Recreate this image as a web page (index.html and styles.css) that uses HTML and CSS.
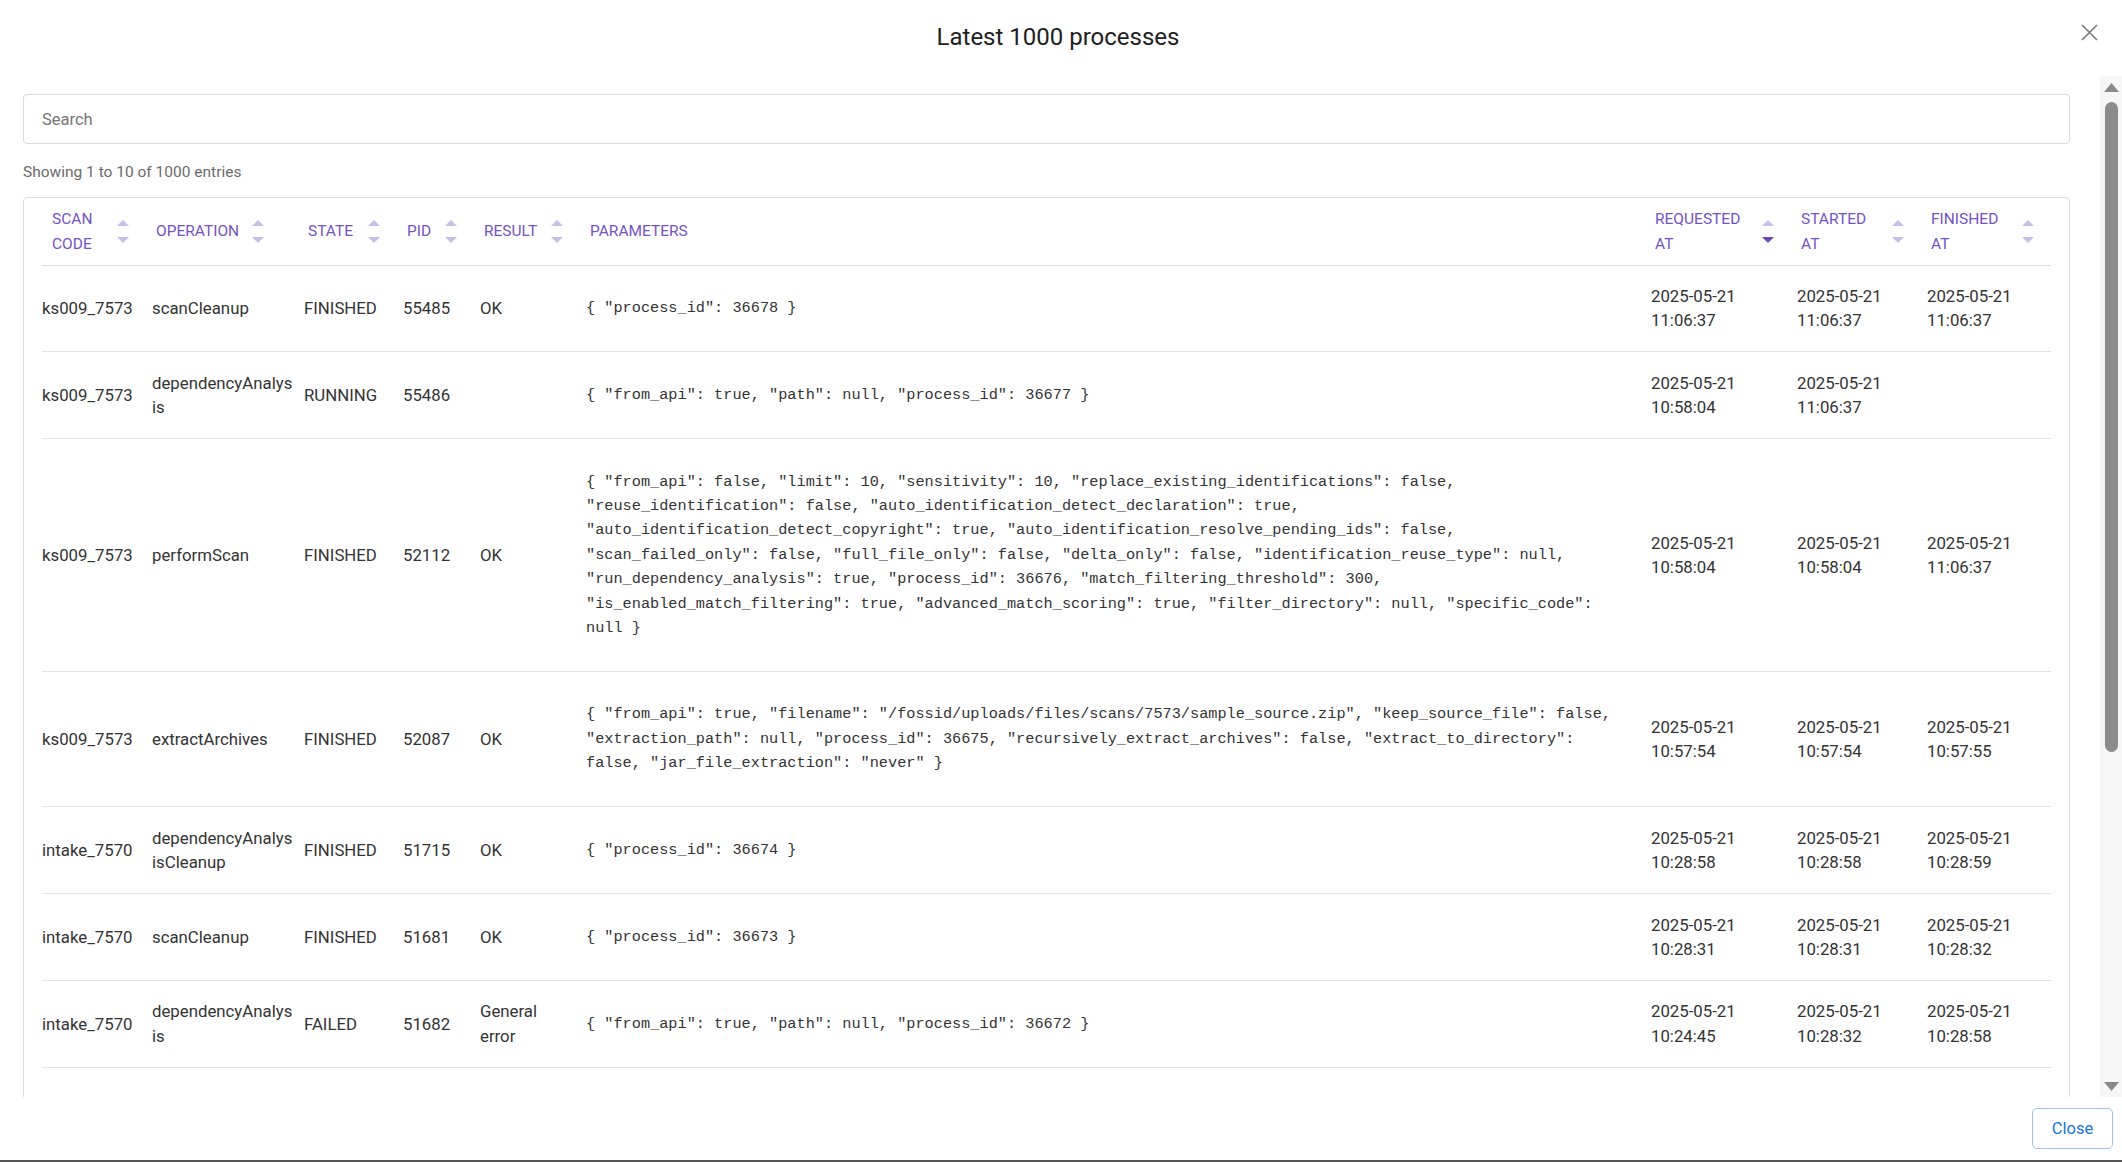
FILE: index.html
```html
<!DOCTYPE html>
<html lang="en">
<head>
<meta charset="utf-8">
<title>Latest 1000 processes</title>
<link rel="stylesheet" href="styles.css">
</head>
<body>
<div class="modal">
  <header class="modal-header">
    <h1 class="modal-title">Latest 1000 processes</h1>
    <button class="close-x" aria-label="Close">
      <svg width="17" height="17" viewBox="0 0 17 17"><path d="M1 1 L16 16 M16 1 L1 16" stroke="#7a7a7a" stroke-width="1.6" fill="none"/></svg>
    </button>
  </header>

  <div class="modal-body">
    <div class="body-content">
      <input class="search" type="text" placeholder="Search">
      <div class="info">Showing 1 to 10 of 1000 entries</div>
      <div class="card">
        <table class="grid">
          <thead>
            <tr>
              <th class="c-scan"><div class="th-inner"><span class="th-text">SCAN CODE</span><svg class="sort" width="12" height="23" viewBox="0 0 12 23"><polygon class="off" points="0,6 6,0 12,6"/><polygon class="off" points="0,17 12,17 6,23"/></svg></div></th>
              <th class="c-op"><div class="th-inner"><span class="th-text">OPERATION</span><svg class="sort" width="12" height="23" viewBox="0 0 12 23"><polygon class="off" points="0,6 6,0 12,6"/><polygon class="off" points="0,17 12,17 6,23"/></svg></div></th>
              <th class="c-state"><div class="th-inner"><span class="th-text">STATE</span><svg class="sort" width="12" height="23" viewBox="0 0 12 23"><polygon class="off" points="0,6 6,0 12,6"/><polygon class="off" points="0,17 12,17 6,23"/></svg></div></th>
              <th class="c-pid"><div class="th-inner"><span class="th-text">PID</span><svg class="sort" width="12" height="23" viewBox="0 0 12 23"><polygon class="off" points="0,6 6,0 12,6"/><polygon class="off" points="0,17 12,17 6,23"/></svg></div></th>
              <th class="c-result"><div class="th-inner"><span class="th-text">RESULT</span><svg class="sort" width="12" height="23" viewBox="0 0 12 23"><polygon class="off" points="0,6 6,0 12,6"/><polygon class="off" points="0,17 12,17 6,23"/></svg></div></th>
              <th class="c-params"><div class="th-inner"><span class="th-text">PARAMETERS</span></div></th>
              <th class="c-req"><div class="th-inner"><span class="th-text">REQUESTED AT</span><svg class="sort" width="12" height="23" viewBox="0 0 12 23"><polygon class="off" points="0,6 6,0 12,6"/><polygon class="on" points="0,17 12,17 6,23"/></svg></div></th>
              <th class="c-start"><div class="th-inner"><span class="th-text">STARTED AT</span><svg class="sort" width="12" height="23" viewBox="0 0 12 23"><polygon class="off" points="0,6 6,0 12,6"/><polygon class="off" points="0,17 12,17 6,23"/></svg></div></th>
              <th class="c-fin"><div class="th-inner"><span class="th-text">FINISHED AT</span><svg class="sort" width="12" height="23" viewBox="0 0 12 23"><polygon class="off" points="0,6 6,0 12,6"/><polygon class="off" points="0,17 12,17 6,23"/></svg></div></th>
            </tr>
          </thead>
          <tbody>
            <tr>
              <td>ks009_7573</td><td class="c-op">scanCleanup</td><td>FINISHED</td><td>55485</td><td class="c-result">OK</td>
              <td class="c-params"><div class="params">{ "process_id": 36678 }</div></td>
              <td>2025-05-21 11:06:37</td><td>2025-05-21 11:06:37</td><td>2025-05-21 11:06:37</td>
            </tr>
            <tr>
              <td>ks009_7573</td><td class="c-op">dependencyAnalysis</td><td>RUNNING</td><td>55486</td><td class="c-result"></td>
              <td class="c-params"><div class="params">{ "from_api": true, "path": null, "process_id": 36677 }</div></td>
              <td>2025-05-21 10:58:04</td><td>2025-05-21 11:06:37</td><td></td>
            </tr>
            <tr>
              <td>ks009_7573</td><td class="c-op">performScan</td><td>FINISHED</td><td>52112</td><td class="c-result">OK</td>
              <td class="c-params"><div class="params">{ "from_api": false, "limit": 10, "sensitivity": 10, "replace_existing_identifications": false, "reuse_identification": false, "auto_identification_detect_declaration": true, "auto_identification_detect_copyright": true, "auto_identification_resolve_pending_ids": false, "scan_failed_only": false, "full_file_only": false, "delta_only": false, "identification_reuse_type": null, "run_dependency_analysis": true, "process_id": 36676, "match_filtering_threshold": 300, "is_enabled_match_filtering": true, "advanced_match_scoring": true, "filter_directory": null, "specific_code": null }</div></td>
              <td>2025-05-21 10:58:04</td><td>2025-05-21 10:58:04</td><td>2025-05-21 11:06:37</td>
            </tr>
            <tr>
              <td>ks009_7573</td><td class="c-op">extractArchives</td><td>FINISHED</td><td>52087</td><td class="c-result">OK</td>
              <td class="c-params"><div class="params">{ "from_api": true, "filename": "/fossid/uploads/files/scans/7573/sample_source.zip", "keep_source_file": false, "extraction_path": null, "process_id": 36675, "recursively_extract_archives": false, "extract_to_directory": false, "jar_file_extraction": "never" }</div></td>
              <td>2025-05-21 10:57:54</td><td>2025-05-21 10:57:54</td><td>2025-05-21 10:57:55</td>
            </tr>
            <tr>
              <td>intake_7570</td><td class="c-op">dependencyAnalysisCleanup</td><td>FINISHED</td><td>51715</td><td class="c-result">OK</td>
              <td class="c-params"><div class="params">{ "process_id": 36674 }</div></td>
              <td>2025-05-21 10:28:58</td><td>2025-05-21 10:28:58</td><td>2025-05-21 10:28:59</td>
            </tr>
            <tr>
              <td>intake_7570</td><td class="c-op">scanCleanup</td><td>FINISHED</td><td>51681</td><td class="c-result">OK</td>
              <td class="c-params"><div class="params">{ "process_id": 36673 }</div></td>
              <td>2025-05-21 10:28:31</td><td>2025-05-21 10:28:31</td><td>2025-05-21 10:28:32</td>
            </tr>
            <tr>
              <td>intake_7570</td><td class="c-op">dependencyAnalysis</td><td>FAILED</td><td>51682</td><td class="c-result">General error</td>
              <td class="c-params"><div class="params">{ "from_api": true, "path": null, "process_id": 36672 }</div></td>
              <td>2025-05-21 10:24:45</td><td>2025-05-21 10:28:32</td><td>2025-05-21 10:28:58</td>
            </tr>
          </tbody>
        </table>
      </div>
    </div>
    <div class="scrollbar" aria-hidden="true">
      <div class="sb-btn"><svg width="15" height="9" viewBox="0 0 15 9"><polygon points="0,9 7.5,0 15,9" fill="#8a8a8a"/></svg></div>
      <div class="sb-thumb"></div>
      <div class="sb-space"></div>
      <div class="sb-btn"><svg width="15" height="9" viewBox="0 0 15 9"><polygon points="0,0 15,0 7.5,9" fill="#8a8a8a"/></svg></div>
    </div>
  </div>

  <footer class="modal-footer">
    <button class="btn-close">Close</button>
  </footer>
</div>
</body>
</html>
```

FILE: styles.css
```css
* { box-sizing: border-box; }

html, body {
  margin: 0;
  padding: 0;
}

body {
  width: 2122px;
  height: 1162px;
  overflow: hidden;
  background: #ffffff;
  color: #333333;
  font-family: Roboto, "Liberation Sans", Arial, sans-serif;
}

.modal {
  height: 1162px;
  display: flex;
  flex-direction: column;
  border-bottom: 2px solid #555555;
}

/* header */
.modal-header {
  height: 76px;
  flex: none;
  display: grid;
  grid-template-columns: 1fr auto 1fr;
  align-items: center;
  padding: 0 24px 0 18px;
}

.modal-title {
  grid-column: 2;
  margin: 0 0 2px 0;
  font-size: 24px;
  font-weight: 400;
  line-height: 30px;
  color: #212121;
}

.close-x {
  grid-column: 3;
  justify-self: end;
  align-self: start;
  margin-top: 24px;
  width: 17px;
  height: 17px;
  padding: 0;
  border: 0;
  background: none;
  display: flex;
}

/* body */
.modal-body {
  flex: 1;
  min-height: 0;
  display: flex;
}

.body-content {
  flex: 1;
  min-width: 0;
  overflow: hidden;
  padding: 18px 30px 0 23px;
}

.search {
  display: block;
  width: 100%;
  height: 50px;
  margin: 0;
  padding: 0 18px;
  border: 1px solid #d8d8e0;
  border-radius: 4px;
  font-family: Roboto, "Liberation Sans", Arial, sans-serif;
  font-size: 16.5px;
  color: #333;
  background: #fff;
  outline: none;
}

.search::placeholder {
  color: #767676;
}

.info {
  margin-top: 17px;
  font-size: 15.5px;
  line-height: 22px;
  color: #6b6b6b;
}

.card {
  margin-top: 14px;
  border: 1px solid #dcdce4;
  border-radius: 4px;
  padding: 0 18px 80px;
}

/* table */
.grid {
  width: 100%;
  table-layout: fixed;
  border-collapse: collapse;
}

.grid th {
  padding: 8.5px 23px 8px 4px;
  font-size: 15.5px;
  line-height: 25px;
  font-weight: 400;
  color: #7453c4;
  text-align: left;
  vertical-align: middle;
  border-bottom: 1px solid #dedede;
}

.th-inner {
  display: flex;
  align-items: center;
  gap: 8px;
}

.sort {
  flex: none;
  margin-left: auto;
}

.sort .off { fill: #c9bde9; }
.sort .on { fill: #6a4bb8; }

.grid th.c-scan { width: 110px; padding-left: 10px; }
.grid th.c-op { width: 152px; padding-right: 40px; }
.grid th.c-state { width: 99px; }
.grid th.c-pid { width: 77px; }
.grid th.c-result { width: 106px; }
.grid th.c-params { width: 1065px; }
.grid th.c-req { width: 146px; }
.grid th.c-start { width: 130px; }
.grid th.c-fin { width: 124px; padding-right: 17px; }

.grid td {
  padding: 18.5px 8px 18.5px 0;
  font-size: 16.8px;
  line-height: 24.4px;
  color: #333333;
  vertical-align: middle;
  border-bottom: 1px solid #e3e3e3;
}

.grid td.c-op {
  padding-right: 10px;
  word-break: break-all;
}

.grid td.c-result { padding-right: 20px; }
.grid td.c-params { padding-right: 30px; }

.params {
  margin: 12px 0;
  font-family: "Liberation Mono", "DejaVu Sans Mono", monospace;
  font-size: 15.25px;
  line-height: 24.4px;
  color: #333333;
}

/* scrollbar */
.scrollbar {
  width: 22px;
  flex: none;
  background: #f6f6f6;
  display: flex;
  flex-direction: column;
  align-items: center;
}

.sb-btn {
  height: 22px;
  flex: none;
  display: flex;
  align-items: center;
  justify-content: center;
}

.sb-thumb {
  margin-top: 4px;
  width: 13px;
  height: 650px;
  flex: none;
  border-radius: 7px;
  background: #8c8c8c;
}

.sb-space { flex: 1; }

/* footer */
.modal-footer {
  height: 63px;
  flex: none;
  display: flex;
  justify-content: flex-end;
  align-items: flex-start;
  padding: 11px 9px 0 0;
}

.btn-close {
  width: 81px;
  height: 41px;
  border: 1px solid #9dc1ee;
  border-radius: 5px;
  background: #fff;
  color: #1a73e8;
  font-family: Roboto, "Liberation Sans", Arial, sans-serif;
  font-size: 16.5px;
  padding: 0;
}
```
